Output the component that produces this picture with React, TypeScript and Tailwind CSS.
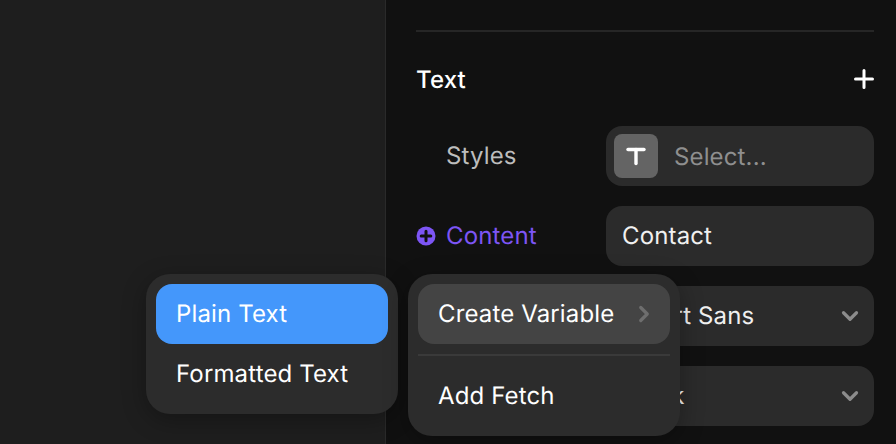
import { ChevronDown, ChevronRight } from 'lucide-react';

function Row({ label, children }: { label?: React.ReactNode; children: React.ReactNode }) {
  return (
    <div className="flex items-center justify-between">
      <div className="flex items-center">{label}</div>
      <div className="flex h-[60px] w-[268px] items-center rounded-2xl bg-[#2b2b2b] text-[#f0f0f0]">
        {children}
      </div>
    </div>
  );
}

function SelectValue({ value }: { value: string }) {
  return (
    <>
      <span className="ml-4 flex-1">{value}</span>
      <ChevronDown size={26} strokeWidth={3} className="mr-[11px] text-[#8c8c8c]" />
    </>
  );
}

export default function App() {
  return (
    <div
      className="relative flex h-[444px] w-[896px] overflow-hidden bg-[#111111] text-[24px] tracking-[0.14px] text-white antialiased [text-rendering:geometricPrecision]"
      style={{ fontFamily: 'Inter, sans-serif' }}
    >
      <div className="h-full w-[385px] bg-[#1e1e1e]" />
      <div className="h-full w-px bg-[#2a2a2a]" />

      <div className="flex-1 pl-[30px] pr-[22px] pt-[30px]">
        <div className="h-0.5 bg-[#262626]" />
        <div className="mt-[32px] flex h-[30px] items-center justify-between">
          <span className="pt-0.5 font-medium">Text</span>
          <svg width="20" height="20" viewBox="0 0 20 20" fill="none" stroke="white" strokeWidth="3" strokeLinecap="round">
            <path d="M10 1.5V18.5M1.5 10H18.5" />
          </svg>
        </div>
        <div className="mt-[32px] flex flex-col gap-5">
          <Row label={<span className="ml-[30px] text-[#bdbdbd]">Styles</span>}>
            <div className="ml-2 flex h-11 w-11 items-center justify-center rounded-lg bg-[#646464]">
              <svg width="20" height="20" viewBox="0 0 20 20" fill="none" stroke="white" strokeWidth="3.4" strokeLinecap="round">
                <path d="M2 3.5H18" />
                <path d="M10 3.5V17.5" />
              </svg>
            </div>
            <span className="ml-4 pt-0.5 text-[#8f8f8f]">Select...</span>
          </Row>
          <Row
            label={
              <>
                <svg width="20" height="20" viewBox="0 0 20 20" className="mr-2.5">
                  <circle cx="10" cy="10" r="9.5" fill="#7d55f5" />
                  <path d="M10 5.2V14.8M5.2 10H14.8" stroke="#111111" strokeWidth="3" strokeLinecap="round" />
                </svg>
                <span className="text-[#7d55f5]">Content</span>
              </>
            }
          >
            <span className="ml-4">Contact</span>
          </Row>
          <Row>
            <SelectValue value="Albert Sans" />
          </Row>
          <Row>
            <SelectValue value="Black" />
          </Row>
        </div>
      </div>

      <div className="absolute left-[146px] top-[274px] w-[252px] rounded-3xl bg-[#2c2c2c] p-2.5 shadow-[0_6px_24px_rgba(0,0,0,0.3)]">
        <div className="flex h-[60px] items-center rounded-2xl bg-[#4497fb] px-5">Plain Text</div>
        <div className="flex h-[60px] items-center px-5">Formatted Text</div>
      </div>

      <div className="absolute left-[408px] top-[274px] w-[272px] rounded-3xl bg-[#2c2c2c] px-2.5 pt-2.5 shadow-[0_6px_24px_rgba(0,0,0,0.3)]">
        <div className="flex h-[60px] items-center justify-between rounded-2xl bg-[#444444] pl-5 pr-[13px]">
          <span>Create Variable</span>
          <ChevronRight size={26} strokeWidth={3} className="text-[#6e6e6e]" />
        </div>
        <div className="mt-2.5 h-0.5 bg-[#3a3a3a]" />
        <div className="flex h-[80px] items-center px-5">Add Fetch</div>
      </div>
    </div>
  );
}
